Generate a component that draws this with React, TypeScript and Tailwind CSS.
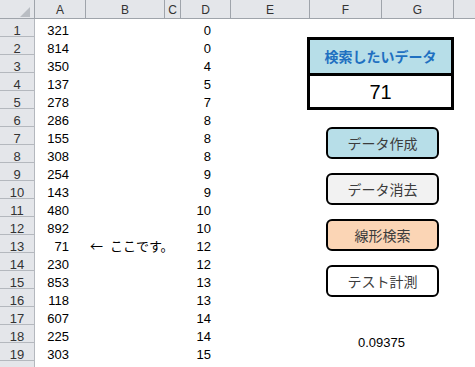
import React from 'react';

const colA = [321, 814, 350, 137, 278, 286, 155, 308, 254, 143, 480, 892, 71, 230, 853, 118, 607, 225, 303];
const colD = [0, 0, 4, 5, 7, 8, 8, 8, 9, 9, 10, 10, 12, 12, 13, 13, 14, 14, 15];
const letters = ['A', 'B', 'C', 'D', 'E', 'F', 'G', ''];

const font = { fontFamily: '"Liberation Sans", "Noto Sans CJK JP", sans-serif' };
const jp = { fontFamily: '"Noto Sans CJK JP", sans-serif' };

const buttons = [
  { label: 'データ作成', bg: 'bg-[#b7dee8]' },
  { label: 'データ消去', bg: 'bg-[#f2f2f2]' },
  { label: '線形検索', bg: 'bg-[#fbd5b5]' },
  { label: 'テスト計測', bg: 'bg-white' },
];

export default function App() {
  return (
    <div className="relative h-[367px] w-[475px] overflow-hidden bg-white text-[13px] text-black" style={font}>
      {/* sheet grid */}
      <div className="grid grid-cols-[35px_51px_79px_16px_50px_79px_72px_72px_1fr] grid-rows-[19px_repeat(20,18px)]">
        <div className="relative border-b border-r border-[#9fa4ab] bg-[#e4e6ea]">
          <svg className="absolute left-[20px] top-[7px]" width="10" height="10" viewBox="0 0 10 10">
            <polygon points="10,0 10,10 0,10" fill="#b9bdc3" />
          </svg>
        </div>
        {letters.map((l, i) => (
          <div
            key={'h' + i}
            className={`flex justify-center border-b border-[#9fa4ab] bg-[#e4e6ea] pt-[2px] text-[12px] leading-[16px] text-[#333] ${i < 7 ? 'border-r' : ''}`}
          >
            {l}
          </div>
        ))}

        {Array.from({ length: 20 }).map((_, r) => (
          <React.Fragment key={r}>
            <div className="flex justify-center border-b border-r border-[#b4b8be] bg-[#e4e6ea] pt-[5px] leading-[13px] text-[#333]">
              {r < 19 ? r + 1 : ''}
            </div>
            <div className="pr-[17px] pt-[5px] text-right leading-[13px]">{colA[r] ?? ''}</div>
            <div className="whitespace-nowrap pl-[4px] pt-[4px] leading-[13px] [word-spacing:4px]" style={jp}>
              {r === 12 ? '← ここです。' : ''}
            </div>
            <div />
            <div className="pr-[20px] pt-[5px] text-right leading-[13px]">{colD[r] ?? ''}</div>
            <div />
            <div />
            <div />
            <div />
          </React.Fragment>
        ))}
      </div>

      {/* shapes floating over the sheet */}
      <div className="absolute left-[307px] top-[37px] flex w-[147px] flex-col">
        <div className="flex flex-col border-[3px] border-black">
          <div
            className="flex h-[33px] items-center justify-center bg-[#b7dee8] text-[14px] font-bold text-[#1f70c1]"
            style={jp}
          >
            検索したいデータ
          </div>
          <div className="flex h-[34px] items-center justify-center border-t-[3px] border-black bg-white text-[20px]">
            71
          </div>
        </div>

        <div className="ml-[19px] mt-[17px] flex flex-col gap-[14px]">
          {buttons.map((b) => (
            <div
              key={b.label}
              className={`flex h-[32px] w-[113px] items-center justify-center rounded-[6px] border-2 border-black ${b.bg} text-[14px] text-[#3c3c3c]`}
              style={jp}
            >
              {b.label}
            </div>
          ))}
        </div>

        <div className="ml-[51px] mt-[39px] text-[13px] leading-[13px]">0.09375</div>
      </div>
    </div>
  );
}
